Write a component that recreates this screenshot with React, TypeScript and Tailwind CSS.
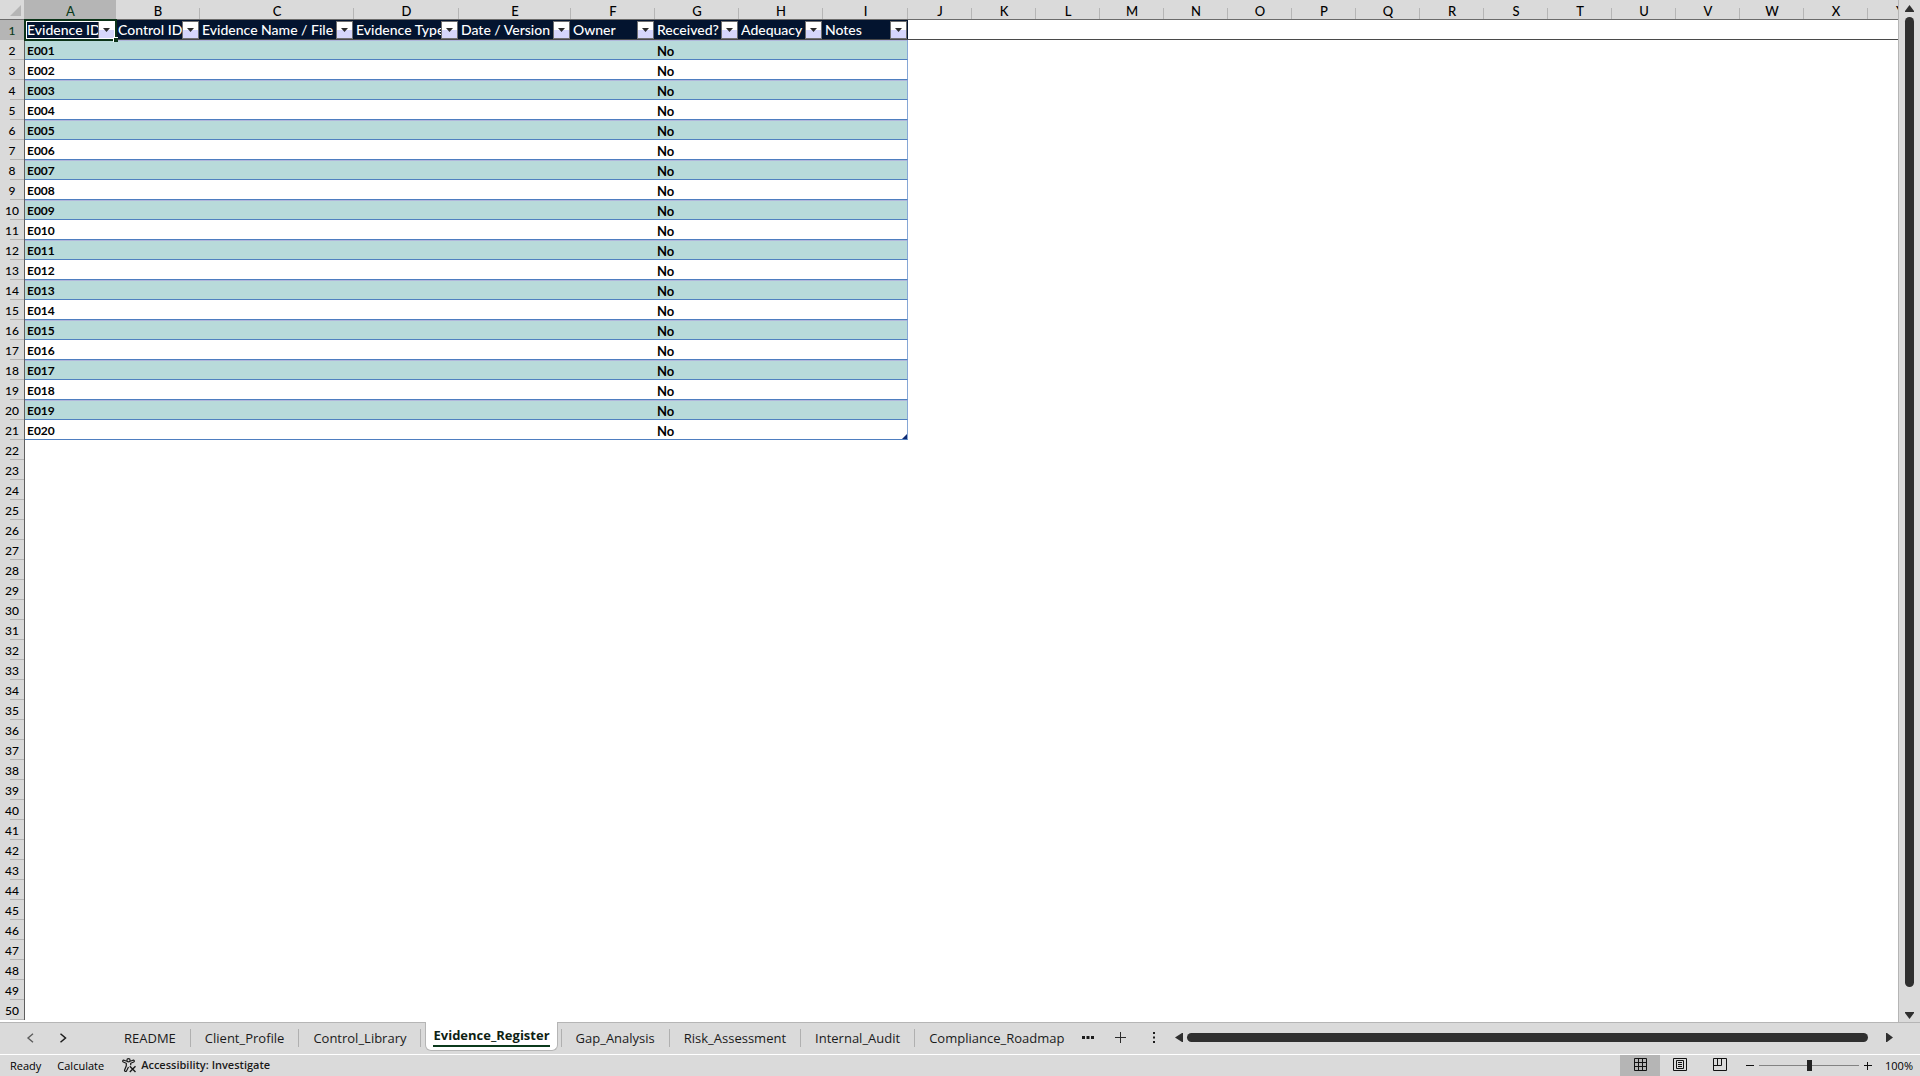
import { useState } from 'react';
import clsx from 'clsx';

type Column = {
  letter: string;
  width: string;
  title?: string;
};

const COLUMNS: Column[] = [
  { letter: 'A', width: 'w-[91px]', title: 'Evidence ID' },
  { letter: 'B', width: 'w-[84px]', title: 'Control ID' },
  { letter: 'C', width: 'w-[154px]', title: 'Evidence Name / File' },
  { letter: 'D', width: 'w-[105px]', title: 'Evidence Type' },
  { letter: 'E', width: 'w-[112px]', title: 'Date / Version' },
  { letter: 'F', width: 'w-[84px]', title: 'Owner' },
  { letter: 'G', width: 'w-[84px]', title: 'Received?' },
  { letter: 'H', width: 'w-[84px]', title: 'Adequacy' },
  { letter: 'I', width: 'w-[85px]', title: 'Notes' },
  ...'JKLMNOPQRSTUVWXY'.split('').map((letter) => ({ letter, width: 'w-[64px]' })),
];

const TABLE_COLUMNS = COLUMNS.filter((c) => c.title);
const EMPTY_COLUMNS = COLUMNS.length - TABLE_COLUMNS.length;

const EVIDENCE = Array.from({ length: 20 }, (_, i) => ({
  id: `E${String(i + 1).padStart(3, '0')}`,
  received: 'No',
}));

const FIRST_EMPTY_ROW = EVIDENCE.length + 2;
const EMPTY_ROWS = Array.from({ length: 50 - FIRST_EMPTY_ROW + 1 }, (_, i) => FIRST_EMPTY_ROW + i);

const SHEETS = [
  'README',
  'Client_Profile',
  'Control_Library',
  'Evidence_Register',
  'Gap_Analysis',
  'Risk_Assessment',
  'Internal_Audit',
  'Compliance_Roadmap',
];

function RowHeader({ n, active }: { n: number; active?: boolean }) {
  return (
    <th
      scope="row"
      className={clsx(
        'relative h-5 border-r border-[#5f5f5f] p-0 pt-0.5 text-center text-xs leading-[18px] font-medium',
        'after:absolute after:right-0 after:bottom-0 after:h-px after:w-3.5 after:bg-[#b5b5b5]',
        active ? 'bg-[#b5b5b5] text-[#0b3a1c]' : 'bg-[#dadada] text-black',
      )}
    >
      {n}
    </th>
  );
}

function FilterButton({ title }: { title: string }) {
  return (
    <button
      type="button"
      aria-label={`Filter ${title}`}
      className="absolute top-px right-px flex h-[18px] w-[17px] items-center justify-center border border-[#6f6f6f] bg-linear-to-b from-white from-50% to-[#d6d6fb] to-50%"
    >
      <svg width="7" height="4" viewBox="0 0 7 4" aria-hidden>
        <path d="M0 0h7L3.5 4z" fill="#2b2b2b" />
      </svg>
    </button>
  );
}

function Sheet() {
  return (
    <div className="min-w-0 flex-1 overflow-hidden border-r border-[#b5b5b5] bg-white">
      <table className="w-[1932px] table-fixed border-separate border-spacing-0 font-['Lato','Liberation_Sans',sans-serif] text-[13px] leading-4 text-black">
        <colgroup>
          <col className="w-[25px]" />
          {COLUMNS.map((c) => (
            <col key={c.letter} className={c.width} />
          ))}
        </colgroup>
        <thead>
          <tr>
            <td className="h-5 border-r border-b border-r-[#b5b5b5] border-b-[#6b6b6b] bg-[#dadada] p-0">
              <svg width="24" height="19" viewBox="0 0 24 19" className="block" aria-hidden>
                <path d="M21 5v11H10z" fill="#b5b5b5" />
              </svg>
            </td>
            {COLUMNS.map((c) => (
              <th
                key={c.letter}
                scope="col"
                className={clsx(
                  'relative h-5 border-b border-[#6b6b6b] p-0 pt-[3px] font-medium',
                  'after:absolute after:right-0 after:bottom-0 after:h-[11px] after:w-px after:bg-[#b5b5b5]',
                  c.letter === 'A' ? 'bg-[#b5b5b5] text-[#0b3a1c]' : 'bg-[#dadada]',
                )}
              >
                {c.letter}
              </th>
            ))}
          </tr>
        </thead>
        <tbody>
          <tr>
            <RowHeader n={1} active />
            {TABLE_COLUMNS.map((c, i) => (
              <td
                key={c.letter}
                className="relative h-5 border-b border-[#4a4a4a] bg-[#03142f] p-0 pt-px pl-0.5 text-sm leading-[18px] font-medium text-white"
              >
                <div className="overflow-hidden whitespace-nowrap">{c.title}</div>
                <FilterButton title={c.title!} />
                {i === 0 && (
                  <div className="pointer-events-none absolute -inset-x-px -top-px -bottom-0.5 z-10 border-2 border-[#0b3318]">
                    <div className="h-full border border-white" />
                    <div className="absolute -right-[3px] -bottom-[3px] size-[5px] border-t border-l border-white bg-[#0b3318]" />
                  </div>
                )}
              </td>
            ))}
            <td colSpan={EMPTY_COLUMNS} className="border-b border-[#4a4a4a] p-0" />
          </tr>
          {EVIDENCE.map((row, i) => (
            <tr key={row.id}>
              <RowHeader n={i + 2} />
              {TABLE_COLUMNS.map((c) => (
                <td
                  key={c.letter}
                  className={clsx(
                    'h-5 border-b border-[#4f7fc0] p-0 pt-[3px] pl-0.5 font-bold',
                    i % 2 === 0 && 'bg-[#b8dada] shadow-[inset_0_1px_0_#b0b6dc]',
                    c.letter === 'A' && 'text-xs leading-4',
                    c.letter === 'I' && 'relative border-r border-r-[#86a7d6]',
                  )}
                >
                  {c.letter === 'A' && row.id}
                  {c.letter === 'G' && row.received}
                  {c.letter === 'I' && i === EVIDENCE.length - 1 && (
                    <svg width="5" height="5" viewBox="0 0 5 5" className="absolute right-0 bottom-0" aria-hidden>
                      <path d="M5 0v5H0z" fill="#0f2a73" />
                    </svg>
                  )}
                </td>
              ))}
              <td colSpan={EMPTY_COLUMNS} className="p-0" />
            </tr>
          ))}
          {EMPTY_ROWS.map((n) => (
            <tr key={n}>
              <RowHeader n={n} />
              <td colSpan={COLUMNS.length} className="p-0" />
            </tr>
          ))}
        </tbody>
      </table>
    </div>
  );
}

function VerticalScrollbar() {
  return (
    <div className="flex w-[21px] shrink-0 flex-col items-center bg-[#dadada] pt-[5px] pb-[3px]">
      <button type="button" aria-label="Scroll up">
        <svg width="9" height="7" viewBox="0 0 9 7" className="block" aria-hidden>
          <path d="M4.5 0 9 6v1H0V6z" fill="#2f2f2f" />
        </svg>
      </button>
      <div className="mt-[5px] mb-[25px] w-[9px] flex-1 rounded-full bg-[#2f2f2f]" />
      <button type="button" aria-label="Scroll down">
        <svg width="9" height="7" viewBox="0 0 9 7" className="block" aria-hidden>
          <path d="M4.5 7 9 1V0H0v1z" fill="#2f2f2f" />
        </svg>
      </button>
    </div>
  );
}

function SheetTabs() {
  const [current, setCurrent] = useState('Evidence_Register');

  return (
    <div className="flex h-8 shrink-0 items-center border-t border-[#b5b5b5] bg-[#dadada] pb-0.5">
      <div className="flex w-[110px] shrink-0 items-center gap-6 pl-[26px]">
        <button type="button" aria-label="Previous sheet">
          <svg width="9" height="10" viewBox="0 0 9 10" fill="none" stroke="#5c5c5c" strokeWidth="1.4" aria-hidden>
            <path d="M7 .7 2 5l5 4.3" />
          </svg>
        </button>
        <button type="button" aria-label="Next sheet">
          <svg width="9" height="10" viewBox="0 0 9 10" fill="none" stroke="#1c1c1c" strokeWidth="1.5" aria-hidden>
            <path d="m1.5.7 5 4.3-5 4.3" />
          </svg>
        </button>
      </div>
      <div className="flex h-full shrink-0 items-center font-['Open_Sans','Noto_Sans',sans-serif] text-[13px] text-[#1a1a1a]">
        {SHEETS.map((name) => (
          <div key={name} className="group flex h-full items-center">
            {name === current ? (
              <button
                type="button"
                aria-current="page"
                className="-mt-px mr-[3px] ml-1 h-[29px] self-start rounded-b-md border border-t-0 border-[#b5b5b5] bg-white px-[7px] font-bold text-[#0f1f14]"
              >
                <span className="block border-b-2 border-[#0b3a1c] leading-5">{name}</span>
              </button>
            ) : (
              <button type="button" onClick={() => setCurrent(name)} className="px-3.5 leading-[18px]">
                {name}
              </button>
            )}
            <span className="h-[18px] w-px bg-[#b0b0b0] group-last:hidden" />
          </div>
        ))}
      </div>
      <div className="ml-1 flex shrink-0 items-center gap-5">
        <button type="button" aria-label="More sheets">
          <svg width="12" height="3" viewBox="0 0 12 3" fill="#1c1c1c" className="block" aria-hidden>
            <path d="M0 0h3v3H0zM4.5 0h3v3h-3zM9 0h3v3H9z" />
          </svg>
        </button>
        <button type="button" aria-label="New sheet">
          <svg width="13" height="13" viewBox="0 0 13 13" stroke="#2b2b2b" className="block" aria-hidden>
            <path d="M6.5 1v11M1 6.5h11" />
          </svg>
        </button>
        <svg width="12" height="11" viewBox="0 0 12 11" fill="#1c1c1c" className="ml-px" aria-hidden>
          <path d="M5 0h2v2H5zM5 4.5h2v2H5zM5 9h2v2H5z" />
        </svg>
      </div>
      <div className="ml-[15px] flex min-w-0 flex-1 items-center pr-[27px]">
        <button type="button" aria-label="Scroll left">
          <svg width="8" height="9" viewBox="0 0 8 9" className="block" aria-hidden>
            <path d="M0 4.5 7 0h1v9H7z" fill="#2f2f2f" />
          </svg>
        </button>
        <div className="mr-[18px] ml-1 h-[9px] flex-1 rounded-full bg-[#2f2f2f]" />
        <button type="button" aria-label="Scroll right">
          <svg width="7" height="9" viewBox="0 0 7 9" className="block" aria-hidden>
            <path d="M7 4.5 1 0H0v9h1z" fill="#2f2f2f" />
          </svg>
        </button>
      </div>
    </div>
  );
}

function AccessibilityIcon() {
  return (
    <svg width="15" height="15" viewBox="0 0 15 15" fill="none" stroke="#1a1a1a" strokeWidth="1.2" aria-hidden>
      <circle cx="6.5" cy="2.3" r="1.6" />
      <path d="M4.9 3.3 2 2.2C.8 1.9.2 3.4 1.3 4l3 1.3v2.5L2.6 12c-.4 1.4 1.3 2 1.9.9L6.5 9M8.1 3.3 11 2.2c1.2-.3 1.8 1.2.7 1.8l-3 1.3v1.9" />
      <path d="m7.8 8.3 5.7 5.7M13.5 8.3 7.8 14" strokeWidth="1.4" />
    </svg>
  );
}

function StatusBar() {
  const [zoom, setZoom] = useState(100);

  return (
    <footer className="flex h-[22px] shrink-0 items-center border-t border-white bg-[#dadada] font-['Open_Sans','Noto_Sans',sans-serif] text-[11px] leading-4 text-black">
      <span className="ml-2.5">Ready</span>
      <span className="ml-4">Calculate</span>
      <button type="button" className="ml-[18px] flex items-center gap-1 pb-px font-semibold text-[#1a1a1a]">
        <AccessibilityIcon />
        Accessibility: Investigate
      </button>
      <div className="ml-auto flex h-full">
        <button type="button" aria-label="Normal view" className="flex w-10 items-center justify-center bg-[#b5b5b5] pb-0.5">
          <svg width="13" height="13" viewBox="0 0 13 13" fill="none" stroke="#111" aria-hidden>
            <path d="M.5.5h12v12H.5zM4.5.5v12M8.5.5v12M.5 4.5h12M.5 8.5h12" />
          </svg>
        </button>
        <button type="button" aria-label="Page layout view" className="flex w-10 items-center justify-center pb-0.5">
          <svg width="14" height="13" viewBox="0 0 14 13" fill="none" stroke="#111" aria-hidden>
            <path d="M.5.5h13v12H.5zM3.5 2.5h7v8h-7zM5 4.5h4M5 6.5h4M5 8.5h4" />
          </svg>
        </button>
        <button type="button" aria-label="Page break preview" className="flex w-10 items-center justify-center pb-0.5">
          <svg width="14" height="13" viewBox="0 0 14 13" fill="none" stroke="#111" aria-hidden>
            <path d="M.5.5h13v12H.5zM.5 7.5h8v-7M4.5.5v7" />
          </svg>
        </button>
      </div>
      <div className="flex w-[132px] items-center justify-end gap-[5px]">
        <button type="button" aria-label="Zoom out" onClick={() => setZoom((z) => Math.max(10, z - 10))}>
          <svg width="8" height="8" viewBox="0 0 8 8" stroke="#111" className="block" aria-hidden>
            <path d="M0 3.5h8" />
          </svg>
        </button>
        <input
          type="range"
          aria-label="Zoom"
          min={10}
          max={190}
          value={zoom}
          onChange={(e) => setZoom(Number(e.target.value))}
          className="h-[11px] w-[100px] appearance-none bg-linear-to-b from-transparent from-[5px] via-[#2b2b2b] via-[5px] to-transparent to-[6px] [&::-webkit-slider-thumb]:h-[11px] [&::-webkit-slider-thumb]:w-[5px] [&::-webkit-slider-thumb]:appearance-none [&::-webkit-slider-thumb]:bg-[#222]"
        />
        <button type="button" aria-label="Zoom in" onClick={() => setZoom((z) => Math.min(190, z + 10))}>
          <svg width="8" height="8" viewBox="0 0 8 8" stroke="#111" className="block" aria-hidden>
            <path d="M0 3.5h8M3.5 0v8" />
          </svg>
        </button>
      </div>
      <span className="ml-[13px] w-[35px]">{zoom}%</span>
    </footer>
  );
}

export default function App() {
  return (
    <div className="flex h-screen flex-col overflow-hidden bg-[#dadada]">
      <div className="flex min-h-0 flex-1">
        <Sheet />
        <VerticalScrollbar />
      </div>
      <SheetTabs />
      <StatusBar />
    </div>
  );
}
